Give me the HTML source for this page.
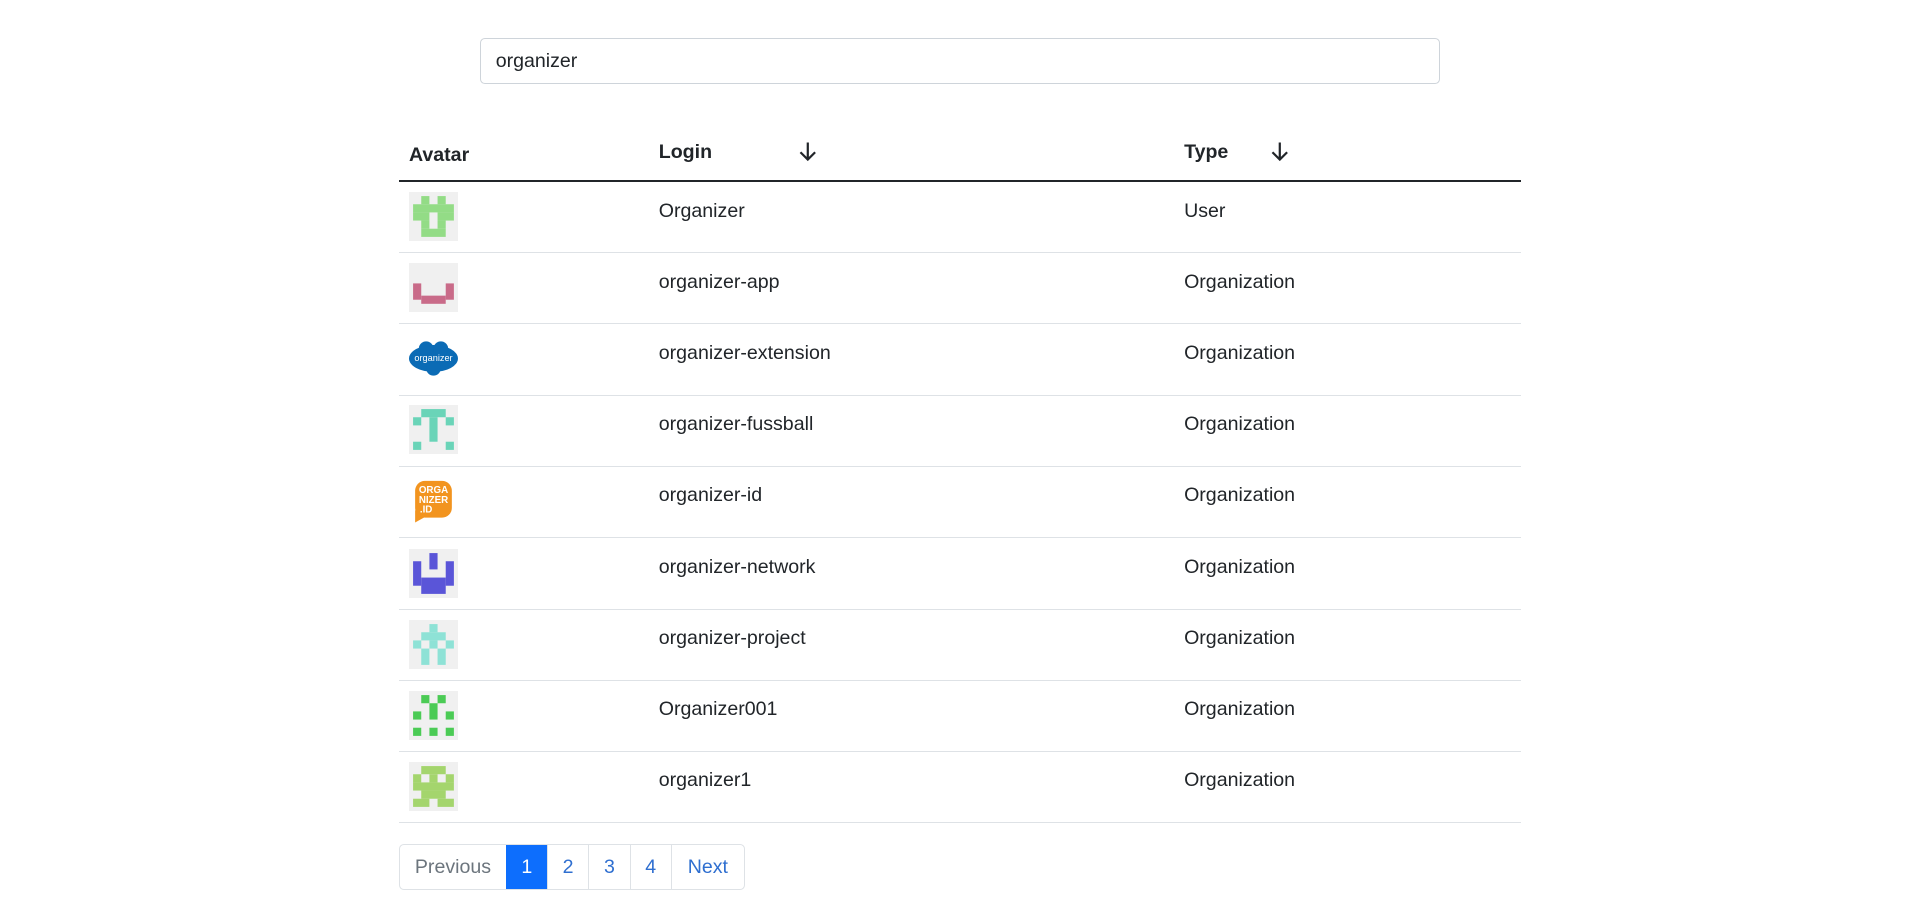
<!DOCTYPE html>
<html><head><meta charset="utf-8">
<style>
html,body{margin:0;background:#fff;}
body{font-family:"Liberation Sans",sans-serif;color:#212529;}
#w{zoom:1.2245;width:1568px;height:750px;position:relative;}
.search{position:absolute;left:392px;top:31px;border:1px solid #ced4da;border-radius:4px;box-sizing:border-box;width:784px;height:38px;font-size:16px;padding:0 12px;line-height:36px;}
.hd{position:absolute;font-weight:bold;font-size:16px;}
.thick{position:absolute;left:326px;top:147px;width:916px;height:2px;background:#212529;}
.row{position:absolute;left:326px;width:916px;height:58px;border-bottom:1px solid #dee2e6;box-sizing:border-box;font-size:16px;}
.row svg{position:absolute;left:8px;top:8px;width:40px;height:40px;}
.row .l{position:absolute;left:212px;top:14px;}
.row .t{position:absolute;left:641px;top:14px;}
.pg{position:absolute;top:689px;left:326px;display:flex;border:1px solid #dee2e6;border-radius:4px;font-size:16px;height:38px;box-sizing:border-box;}
.pg div{padding:0 12px;line-height:36px;color:#2f6fd0;border-left:1px solid #dee2e6;}
.pg div:first-child{border-left:none;color:#6c757d;padding:0 12px 0 12px;}
.pg div:last-child{padding:0 13px;}
.pg .a{background:#0d6efd;color:#fff;border-color:#0d6efd;}
.arr{position:absolute;font-size:18px;}
</style></head><body><div id="w">
<div class="search">organizer</div>
<div class="hd" style="left:334px;top:118px">Avatar</div>
<div class="hd" style="left:538px;top:115px">Login</div>
<div class="hd" style="left:967px;top:115px">Type</div>
<svg class="arr" style="left:652px;top:114px" width="16" height="18" viewBox="0 0 16 18"><path d="M8 2V16M2 10L8 16L14 10" stroke="#212529" stroke-width="1.8" fill="none"/></svg>
<svg class="arr" style="left:1037px;top:114px" width="16" height="18" viewBox="0 0 16 18"><path d="M8 2V16M2 10L8 16L14 10" stroke="#212529" stroke-width="1.8" fill="none"/></svg>
<div class="thick"></div>

<div class="row" style="top:149px"><svg viewBox="0 0 12 12"><rect width="12" height="12" fill="#f0f0f0"/><g fill="#93dc86"><rect x="3" y="1" width="2" height="2"/><rect x="7" y="1" width="2" height="2"/><rect x="1" y="3" width="10" height="2"/><rect x="1" y="5" width="4" height="2"/><rect x="7" y="5" width="4" height="2"/><rect x="3" y="7" width="2" height="2"/><rect x="7" y="7" width="2" height="2"/><rect x="3" y="9" width="6" height="2"/></g></svg><span class="l">Organizer</span><span class="t">User</span></div>
<div class="row" style="top:207px"><svg viewBox="0 0 12 12"><rect width="12" height="12" fill="#f0f0f0"/><g fill="#c96b89"><rect x="1" y="5" width="2" height="4"/><rect x="9" y="5" width="2" height="4"/><rect x="3" y="8" width="6" height="2"/></g></svg><span class="l">organizer-app</span><span class="t">Organization</span></div>
<div class="row" style="top:265px"><svg viewBox="0 0 40 40"><ellipse cx="20" cy="20" rx="20" ry="11" fill="#0b6bb5"/><circle cx="14" cy="12" r="6" fill="#0b6bb5"/><circle cx="26" cy="12" r="6" fill="#0b6bb5"/><circle cx="20" cy="28" r="6" fill="#0b6bb5"/><text x="20" y="22" font-size="7.5" fill="#fff" text-anchor="middle" font-family="Liberation Sans">organizer</text></svg><span class="l">organizer-extension</span><span class="t">Organization</span></div>
<div class="row" style="top:323px"><svg viewBox="0 0 12 12"><rect width="12" height="12" fill="#f0f0f0"/><g fill="#6ad4b8"><rect x="3" y="1" width="6" height="2"/><rect x="1" y="3" width="2" height="2"/><rect x="9" y="3" width="2" height="2"/><rect x="5" y="3" width="2" height="6"/><rect x="1" y="9" width="2" height="2"/><rect x="9" y="9" width="2" height="2"/></g></svg><span class="l">organizer-fussball</span><span class="t">Organization</span></div>
<div class="row" style="top:381px"><svg viewBox="0 0 40 40"><rect x="5" y="4" width="30" height="30" rx="8" fill="#f2941f"/><path d="M5 28L5 38L14 33Z" fill="#f2941f"/><text x="20" y="14" font-size="8" font-weight="bold" fill="#fff" text-anchor="middle" font-family="Liberation Sans">ORGA</text><text x="20" y="22" font-size="8" font-weight="bold" fill="#fff" text-anchor="middle" font-family="Liberation Sans">NIZER</text><text x="14" y="30" font-size="8" font-weight="bold" fill="#fff" text-anchor="middle" font-family="Liberation Sans">.ID</text></svg><span class="l">organizer-id</span><span class="t">Organization</span></div>
<div class="row" style="top:440px"><svg viewBox="0 0 12 12"><rect width="12" height="12" fill="#f0f0f0"/><g fill="#5a55d8"><rect x="5" y="1" width="2" height="4"/><rect x="1" y="3" width="2" height="6"/><rect x="9" y="3" width="2" height="6"/><rect x="3" y="7" width="6" height="4"/></g></svg><span class="l">organizer-network</span><span class="t">Organization</span></div>
<div class="row" style="top:498px"><svg viewBox="0 0 12 12"><rect width="12" height="12" fill="#f0f0f0"/><g fill="#8ee2d6"><rect x="5" y="1" width="2" height="2"/><rect x="3" y="3" width="6" height="2"/><rect x="1" y="5" width="2" height="2"/><rect x="5" y="5" width="2" height="2"/><rect x="9" y="5" width="2" height="2"/><rect x="3" y="7" width="2" height="4"/><rect x="7" y="7" width="2" height="4"/></g></svg><span class="l">organizer-project</span><span class="t">Organization</span></div>
<div class="row" style="top:556px"><svg viewBox="0 0 12 12"><rect width="12" height="12" fill="#f0f0f0"/><g fill="#4bcb55"><rect x="3" y="1" width="2" height="2"/><rect x="7" y="1" width="2" height="2"/><rect x="5" y="3" width="2" height="4"/><rect x="1" y="5" width="2" height="2"/><rect x="9" y="5" width="2" height="2"/><rect x="1" y="9" width="2" height="2"/><rect x="5" y="9" width="2" height="2"/><rect x="9" y="9" width="2" height="2"/></g></svg><span class="l">Organizer001</span><span class="t">Organization</span></div>
<div class="row" style="top:614px"><svg viewBox="0 0 12 12"><rect width="12" height="12" fill="#f0f0f0"/><g fill="#a4d56d"><rect x="3" y="1" width="6" height="2"/><rect x="1" y="3" width="2" height="2"/><rect x="5" y="3" width="2" height="2"/><rect x="9" y="3" width="2" height="2"/><rect x="1" y="5" width="10" height="2"/><rect x="3" y="7" width="6" height="2"/><rect x="1" y="9" width="4" height="2"/><rect x="7" y="9" width="4" height="2"/></g></svg><span class="l">organizer1</span><span class="t">Organization</span></div>

<div class="pg"><div>Previous</div><div class="a">1</div><div>2</div><div>3</div><div>4</div><div>Next</div></div>
</div></body></html>
